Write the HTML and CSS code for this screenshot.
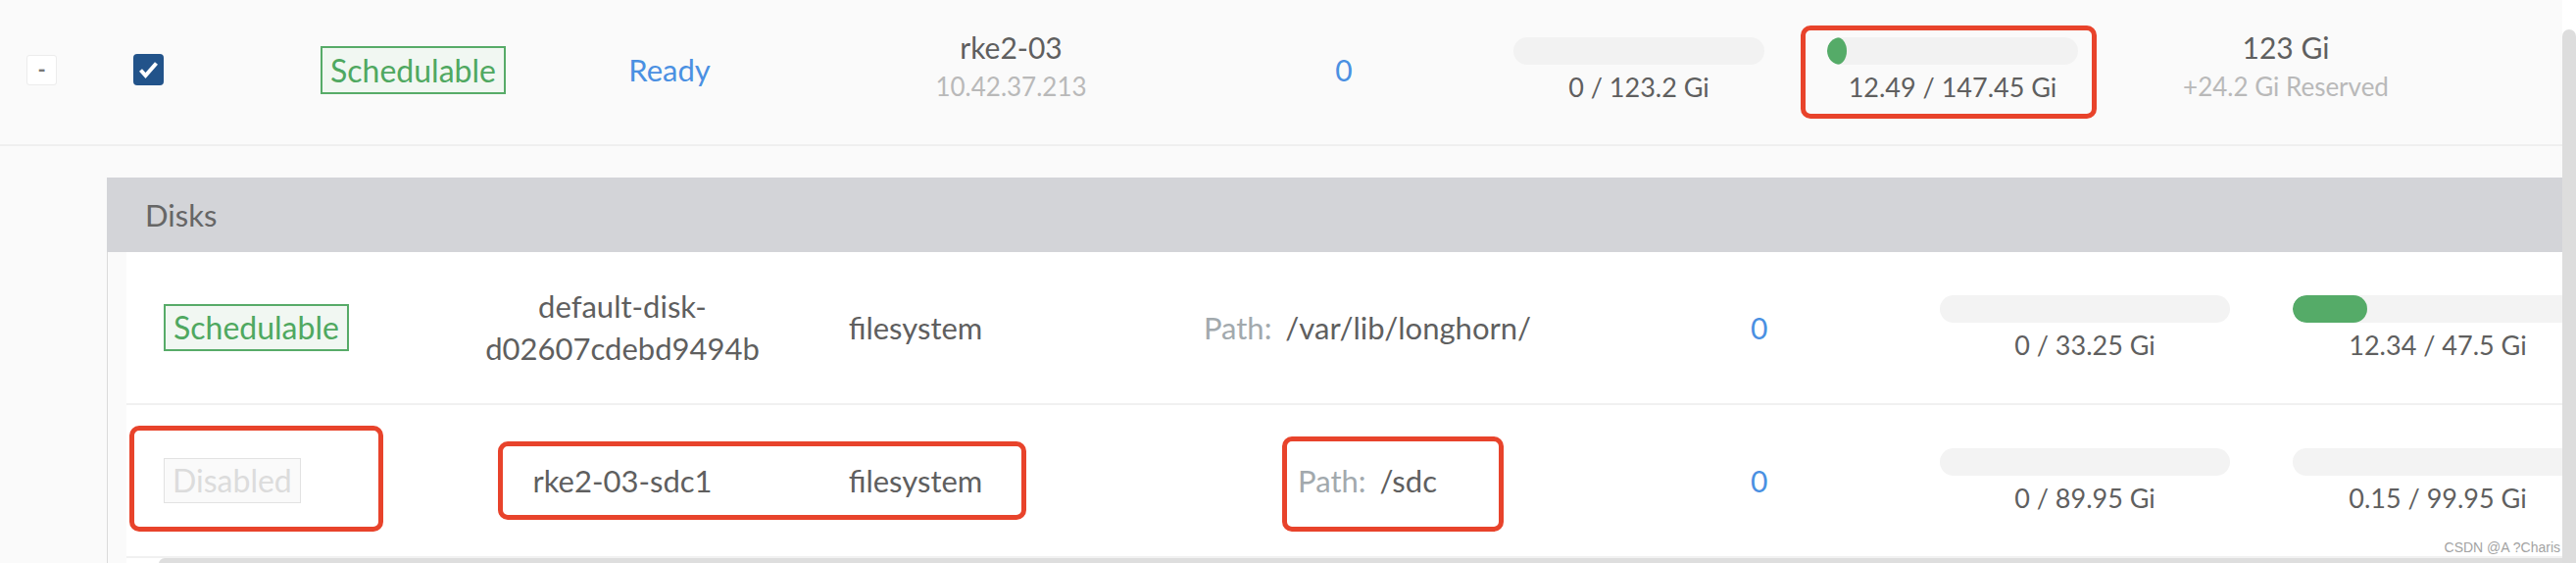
FILE: index.html
```html
<!DOCTYPE html>
<html lang="en">
<head>
<meta charset="utf-8">
<title>Longhorn node disks</title>
<link rel="stylesheet" href="styles.css">
</head>
<body>
<div class="page">
  <div class="main">
    <div class="node-row">
      <div class="cell cell-expand"><span class="expand">-</span></div>
      <div class="cell cell-check">
        <span class="checkbox">
          <svg width="31" height="32" viewBox="0 0 31 32" aria-hidden="true"><polyline points="7.5,16.5 12.5,22 23.5,9.5" fill="none" stroke="#fff" stroke-width="4"/></svg>
        </span>
      </div>
      <div class="cell"><span class="badge">Schedulable</span></div>
      <div class="cell"><span class="link">Ready</span></div>
      <div class="cell stack"><div class="main-text">rke2-03</div><div class="sub">10.42.37.213</div></div>
      <div class="cell"><span class="link num">0</span></div>
      <div class="cell">
        <div class="usage"><div class="bar"></div><div class="cap">0 / 123.2 Gi</div></div>
      </div>
      <div class="cell annotated">
        <div class="usage"><div class="bar"><div class="fill fill-dot" style="width:20px"></div></div><div class="cap">12.49 / 147.45 Gi</div></div>
        <span class="mark mark-node"></span>
      </div>
      <div class="cell stack"><div class="main-text">123 Gi</div><div class="sub">+24.2 Gi Reserved</div></div>
      <div class="cell"></div>
    </div>

    <div class="disks">
      <div class="disks-head">Disks</div>
      <div class="disks-body">
        <div class="disk-panel">
          <div class="disk-table">
            <div class="disk-row">
              <div class="dcell badge-cell"><span class="badge badge-disk">Schedulable</span></div>
              <div class="dcell name-cell">default-disk-<wbr>d02607cdebd9494b</div>
              <div class="dcell">filesystem</div>
              <div class="dcell"><span><span class="path-label">Path:</span> /var/lib/longhorn/</span></div>
              <div class="dcell zero-cell"><span class="link num">0</span></div>
              <div class="dcell"><div class="usage"><div class="bar bar-disk"></div><div class="cap">0 / 33.25 Gi</div></div></div>
              <div class="dcell"><div class="usage"><div class="bar bar-disk"><div class="fill" style="width:76px"></div></div><div class="cap">12.34 / 47.5 Gi</div></div></div>
            </div>
            <div class="disk-row">
              <div class="dcell badge-cell"><span class="badge badge-disk badge-off">Disabled</span></div>
              <div class="dcell name-cell">rke2-03-sdc1</div>
              <div class="dcell">filesystem</div>
              <div class="dcell"><span><span class="path-label">Path:</span> /sdc</span></div>
              <div class="dcell zero-cell"><span class="link num">0</span></div>
              <div class="dcell"><div class="usage"><div class="bar bar-disk"></div><div class="cap">0 / 89.95 Gi</div></div></div>
              <div class="dcell"><div class="usage"><div class="bar bar-disk"><div class="fill" style="width:0px"></div></div><div class="cap">0.15 / 99.95 Gi</div></div></div>
              <span class="mark mark-status"></span>
              <span class="mark mark-name"></span>
              <span class="mark mark-path"></span>
            </div>
          </div>
          <div class="hscroll"></div>
        </div>
      </div>
    </div>

    <div class="watermark">CSDN @A ?Charis</div>
  </div>
  <div class="vscroll"><div class="thumb"></div></div>
</div>
</body>
</html>
```

FILE: styles.css
```css
* { box-sizing: border-box; margin: 0; padding: 0; }

html, body {
  width: 2628px;
  height: 574px;
  overflow: hidden;
  background: #fafafa;
}

body {
  font-family: Lato, "Noto Sans", sans-serif;
  color: #606060;
}

.page {
  display: flex;
  height: 574px;
}

.main {
  flex: 1;
  position: relative;
  overflow: hidden;
  background: #fafafa;
}

.vscroll {
  width: 14px;
  background: #fff;
  display: flex;
  flex-direction: column;
}

.vscroll .thumb {
  margin-top: 30px;
  flex: 1;
  background: #dddddd;
  border-radius: 7px 7px 0 0;
}

/* ---------- node row ---------- */
.node-row {
  display: grid;
  grid-template-columns: 85px 213px 247px 276px 421px 258px 344px 296px 384px 1fr;
  height: 149px;
  padding-bottom: 5px;
  border-bottom: 2px solid #efefef;
}

.cell {
  display: flex;
  flex-direction: column;
  align-items: center;
  justify-content: center;
  text-align: center;
  white-space: nowrap;
}

.cell-expand { align-items: flex-start; padding-left: 27px; }
.cell-check { align-items: flex-start; padding-left: 51px; }

.expand {
  width: 31px;
  height: 31px;
  background: #fff;
  border: 1px solid #ececec;
  border-radius: 3px;
  font-size: 22px;
  line-height: 27px;
  font-weight: 700;
  color: #777;
  text-align: center;
}

.checkbox {
  width: 31px;
  height: 32px;
  background: #22538a;
  border-radius: 4px;
  display: flex;
}

.badge {
  display: inline-block;
  font-size: 32px;
  line-height: 45px;
  padding: 0 8px;
  border: 2px solid #57ab68;
  background: #f1f7f2;
  color: #4fa860;
  white-space: nowrap;
}

.badge-disk { line-height: 44px; }

.badge-off {
  border: 1.5px solid #e2e2e2;
  background: #fafafa;
  color: #dcdcdc;
}

.link {
  color: #4a90e2;
  font-size: 31px;
}

.num { font-size: 30px; }

.stack { padding-bottom: 6px; }

.main-text {
  font-size: 30px;
  line-height: 36px;
  color: #5f5f5f;
}

.sub {
  font-size: 26px;
  line-height: 36px;
  margin-top: 4px;
  color: #b9b9b9;
}

.usage {
  display: flex;
  flex-direction: column;
  align-items: center;
}

.bar {
  width: 256px;
  height: 28px;
  border-radius: 14px;
  background: #f2f2f2;
  overflow: hidden;
}

.bar-disk {
  width: 296px;
  background: #f3f3f3;
}

.fill {
  height: 100%;
  background: #55ab68;
  border-radius: 14px;
}

.fill-dot { border-radius: 50%; }

.cap {
  font-size: 27px;
  line-height: 32px;
  margin-top: 7px;
  color: #5f5f5f;
  white-space: nowrap;
}

.annotated { position: relative; }

/* red annotation frames */
.mark {
  position: absolute;
  border: 5px solid #e8432b;
  border-radius: 10px;
  pointer-events: none;
}

.mark-node { left: -7px; top: 26px; width: 302px; height: 95px; }

/* ---------- disks panel ---------- */
.disks {
  margin-top: 32px;
  margin-left: 109px;
}

.disks-head {
  height: 76px;
  background: #d3d4d8;
  display: flex;
  align-items: center;
  padding-left: 39px;
  font-size: 31px;
  color: #666;
}

.disks-body {
  border-left: 1px solid #dadada;
  padding-left: 19px;
  background: #fafafa;
  height: 317px;
}

.disk-panel {
  background: #fff;
  overflow: hidden;
  height: 100%;
}

.disk-table { width: 2538px; }

.disk-row {
  position: relative;
  display: grid;
  grid-template-columns: 341px 330px 268px 654px 225px 360px 360px;
  height: 156px;
  border-bottom: 2px solid #f1f1f1;
}

.dcell {
  display: flex;
  flex-direction: column;
  align-items: center;
  justify-content: center;
  text-align: center;
  font-size: 31px;
  color: #5f5f5f;
}

.badge-cell { align-items: flex-start; padding-left: 38px; }
.zero-cell { align-items: flex-start; padding-left: 64px; }

.name-cell {
  line-height: 43px;
  padding: 0 20px;
}

.path-label {
  color: #a2a9ad;
  margin-right: 6px;
}

.mark-status { left: 3px; top: 21px; width: 259px; height: 108px; }
.mark-name { left: 379px; top: 37px; width: 539px; height: 80px; }
.mark-path { left: 1179px; top: 32px; width: 226px; height: 97px; }

.hscroll {
  margin-left: 33px;
  height: 12px;
  background: #dedede;
  border-radius: 6px 0 0 6px;
}

.watermark {
  position: absolute;
  right: 2px;
  bottom: 8px;
  font-family: "Liberation Sans", Arial, sans-serif;
  font-size: 14px;
  color: #a3a3a3;
}
```
